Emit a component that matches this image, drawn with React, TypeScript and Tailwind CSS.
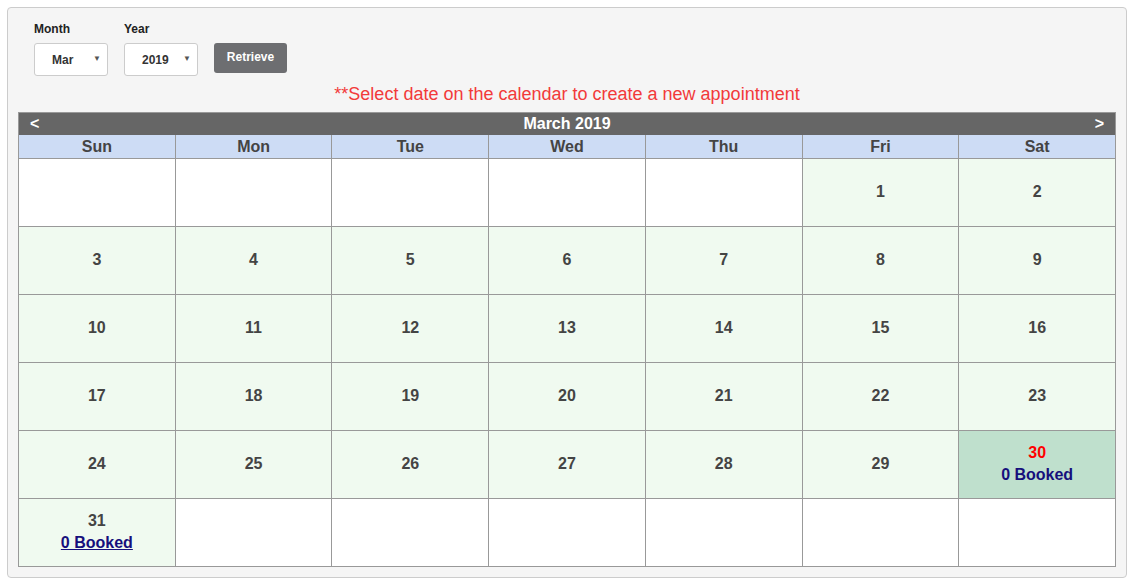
import React from "react";

type Cell = { day?: number; today?: boolean; link?: boolean };

const weeks: Cell[][] = [
  [{}, {}, {}, {}, {}, { day: 1 }, { day: 2 }],
  [3, 4, 5, 6, 7, 8, 9].map((d) => ({ day: d })),
  [10, 11, 12, 13, 14, 15, 16].map((d) => ({ day: d })),
  [17, 18, 19, 20, 21, 22, 23].map((d) => ({ day: d })),
  [
    ...[24, 25, 26, 27, 28, 29].map((d) => ({ day: d })),
    { day: 30, today: true },
  ],
  [{ day: 31, link: true }, {}, {}, {}, {}, {}, {}],
];

const days = ["Sun", "Mon", "Tue", "Wed", "Thu", "Fri", "Sat"];

function FakeSelect({ value }: { value: string }) {
  return (
    <div className="relative flex h-[33px] w-[74px] items-center rounded-[3px] border border-[#cccccc] bg-white">
      <span className="ml-[17px] text-[12px] font-bold text-[#333]">{value}</span>
      <span className="absolute right-[6px] top-[11px] text-[8px] leading-none text-[#555]">▼</span>
    </div>
  );
}

export default function App() {
  return (
    <div className="min-h-[586px] bg-white pt-[7px] pl-[7px]" style={{ fontFamily: '"Liberation Sans", Arial, sans-serif' }}>
      <div className="h-[571px] w-[1120px] rounded-[4px] border border-[#cccccc] bg-[#f5f5f5] px-[10px] pt-[14px]">
        <div className="flex items-start gap-[16px] pl-[16px]">
          <div className="flex flex-col">
            <label className="mb-[6px] text-[12px] font-bold leading-[15px] text-[#222]">Month</label>
            <FakeSelect value="Mar" />
          </div>
          <div className="flex flex-col">
            <label className="mb-[6px] text-[12px] font-bold leading-[15px] text-[#222]">Year</label>
            <FakeSelect value="2019" />
          </div>
          <button className="mt-[21px] h-[30px] w-[73px] rounded-[3px] bg-[#6d6e71] pb-[3px] text-[12px] font-bold text-white">
            Retrieve
          </button>
        </div>
        <div className="mt-[8px] h-[20px] text-center text-[18px] leading-[20px] text-[#f23a3a]">
          **Select date on the calendar to create a new appointment
        </div>
        <div className="mt-[8px] w-[1098px] border-l border-t border-[#999]">
          <div className="flex h-[22px] items-center justify-between border-r border-[#999] bg-[#666666] px-[11px] text-[16px] font-bold text-white">
            <span>&lt;</span>
            <span>March 2019</span>
            <span>&gt;</span>
          </div>
          <div className="grid grid-cols-7">
            {days.map((d) => (
              <div
                key={d}
                className="flex h-[24px] items-center justify-center border-b border-r border-[#999] bg-[#cddcf5] text-[16px] font-bold text-[#444]"
              >
                {d}
              </div>
            ))}
            {weeks.flat().map((c, i) => (
              <div
                key={i}
                className={
                  "flex h-[68px] flex-col items-center justify-center border-b border-r border-[#999] pb-[2px] text-[16px] font-bold leading-[22px] " +
                  (c.day === undefined ? "bg-white" : c.today ? "bg-[#bfe0cd]" : "bg-[#f0faf0]")
                }
              >
                {c.day !== undefined && (
                  <>
                    <span className={c.today ? "text-[#ff0000]" : "text-[#444]"}>{c.day}</span>
                    {c.today && <span className="text-[#160f7c]">0 Booked</span>}
                    {c.link && <span className="text-[#160f7c] underline">0 Booked</span>}
                  </>
                )}
              </div>
            ))}
          </div>
        </div>
      </div>
    </div>
  );
}
